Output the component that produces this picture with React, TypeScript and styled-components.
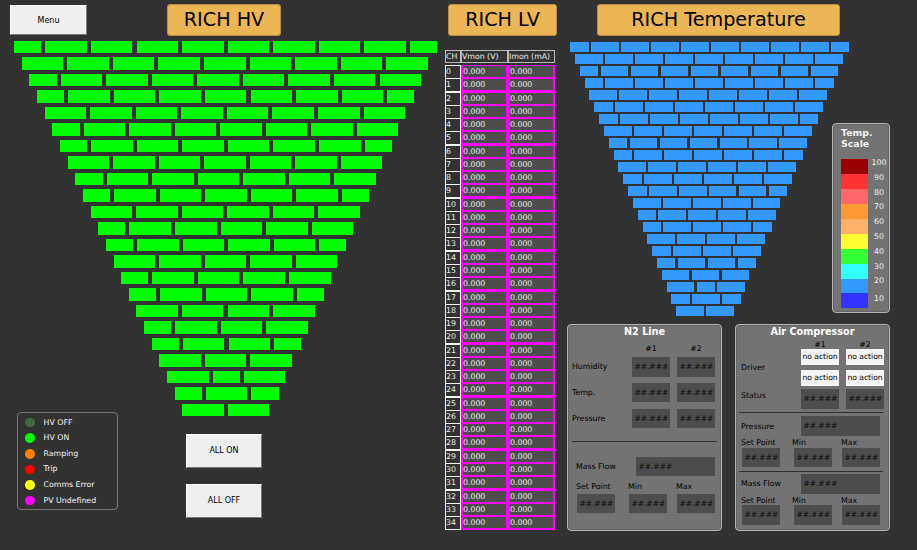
import React from "react";
import styled, { createGlobalStyle } from "styled-components";

const GlobalStyle = createGlobalStyle`
  * { box-sizing: border-box; }
  body {
    margin: 0;
    background: #323232;
    font-family: "DejaVu Sans", sans-serif;
    font-size: 7.8px;
    line-height: 10px;
    color: #000;
  }
`;

const Page = styled.main`
  width: 917px;
  height: 550px;
  overflow: hidden;
  background: #323232;
  display: grid;
  grid-template-columns: 445px 110px 362px;
`;

const Column = styled.section`
  display: flex;
  flex-direction: column;
  min-width: 0;
`;

const TopBar = styled.header<{ $left: number }>`
  display: flex;
  align-items: flex-start;
  flex: none;
  height: 40px;
  padding: 4px 0 0 ${(p) => p.$left}px;
`;

const Title = styled.h1<{ $width: number }>`
  flex: none;
  width: ${(p) => p.$width}px;
  height: 32px;
  margin: 0;
  border: 1px solid #b98f4a;
  border-radius: 3px;
  background: #edb655;
  font-size: 19.2px;
  font-weight: 400;
  line-height: 30px;
  text-align: center;
`;

const Button = styled.button<{ $width: number; $height: number }>`
  flex: none;
  width: ${(p) => p.$width}px;
  height: ${(p) => p.$height}px;
  padding: 1px 0 0;
  border: 1px solid;
  border-color: #fff #777 #777 #fff;
  background: #efefef;
  color: #000;
  font: 8px/10px "DejaVu Sans", sans-serif;
  text-align: center;
`;

const MenuButton = styled(Button)`
  margin: 1px 80px 0 0;
`;

const Wall = styled.div<{ $height: number }>`
  flex: none;
  height: ${(p) => p.$height}px;
`;

const BrickRow = styled.div<{ $left: number; $pitch: number; $gap: number }>`
  display: flex;
  gap: ${(p) => p.$gap}px;
  height: ${(p) => p.$pitch}px;
  padding-left: ${(p) => p.$left}px;
`;

const Brick = styled.div<{ $width: number; $height: number; $fill: string }>`
  flex: none;
  width: ${(p) => p.$width}px;
  height: ${(p) => p.$height}px;
  background: ${(p) => p.$fill};
`;

const HvFooter = styled.div`
  display: flex;
  align-items: flex-start;
`;

const Legend = styled.ul`
  width: 101px;
  height: 98px;
  margin: -9px 68px 0 17px;
  padding: 2.3px 0 0 7px;
  list-style: none;
  border: 1px solid #777;
  border-radius: 4px;
  color: #f2f2f2;
`;

const LegendItem = styled.li`
  display: flex;
  align-items: center;
  height: 15.6px;
`;

const Dot = styled.span<{ $color: string }>`
  width: 9.6px;
  height: 9.6px;
  margin-right: 9px;
  border-radius: 50%;
  background: ${(p) => p.$color};
`;

const Actions = styled.div`
  display: flex;
  flex-direction: column;
  gap: 16px;
  padding-top: 13.4px;
`;

const LvTable = styled.div`
  display: flex;
  flex-direction: column;
  width: 110px;
  margin-top: 10px;
  color: #eee;
`;

const LvHeader = styled.div`
  display: grid;
  grid-template-columns: 16px 47px 47px;
  height: 13px;
  margin-bottom: 2px;
`;

const HeaderCell = styled.div`
  border: 1px solid #bbb;
  line-height: 11px;
  white-space: nowrap;
`;

const LvRow = styled.div`
  display: grid;
  grid-template-columns: 16px 47px 47px;
  height: 13.27px;
`;

const Channel = styled.div`
  border: 1px solid #f4f4f4;
  line-height: 12px;
`;

const Reading = styled.div`
  border: 2px solid #f0f;
  border-top-width: 1px;
  background: #4d4d4d;
  line-height: 11px;
`;

const TempStage = styled.div`
  display: grid;
  grid-template-columns: 335px;
  flex: none;
  height: 284px;
  & > * { grid-area: 1 / 1; }
`;

const panel = `
  border: 1.5px solid #b4b4b4;
  border-radius: 4px;
  background: #737373;
  box-shadow: inset 0 0 0 1px #666;
`;

const ScalePanel = styled.aside`
  ${panel}
  justify-self: end;
  width: 58px;
  height: 190px;
  margin-top: 83px;
  padding: 3px 0 0 8px;
  color: #f2f2f2;
`;

const ScaleTitle = styled.h2`
  margin: 0 0 10px 0;
  font-size: 9.4px;
  line-height: 11px;
  font-weight: 700;
`;

const Scale = styled.div`
  display: grid;
  grid-template-columns: 27px 22px;
`;

const Swatches = styled.div`
  display: flex;
  flex-direction: column;
`;

const Swatch = styled.div<{ $color: string }>`
  height: 14.95px;
  background: ${(p) => p.$color};
`;

const Ticks = styled.div`
  display: flex;
  flex-direction: column;
  text-align: center;
  margin-top: -1px;
  & > span { height: 14.8px; }
  & > span:last-child { margin-top: 3px; }
`;

const Panels = styled.div`
  display: flex;
  gap: 13px;
  margin-left: 12px;
`;

const Panel = styled.section<{ $pad: number }>`
  ${panel}
  width: 155px;
  height: 207px;
  padding-left: ${(p) => p.$pad - 1}px;
`;

const PanelTitle = styled.h2<{ $pad: number }>`
  margin: 0.5px 0 0 -${(p) => p.$pad - 1}px;
  font-size: 9.7px;
  line-height: 12px;
  font-weight: 700;
  text-align: center;
  color: #fff;
`;

const Row = styled.div<{ $cols: string; $height: number; $top?: number; $center?: boolean }>`
  display: grid;
  grid-template-columns: ${(p) => p.$cols};
  align-items: center;
  height: ${(p) => p.$height}px;
  margin-top: ${(p) => p.$top ?? 0}px;
  text-align: ${(p) => (p.$center ? "center" : "left")};
`;

const Label = styled.span`
  padding-top: 1px;
  white-space: nowrap;
`;

const RaisedLabel = styled(Label)`
  padding: 0 0 6px;
`;

const Value = styled.div<{ $width?: number }>`
  width: ${(p) => p.$width ?? 38}px;
  height: 19.4px;
  padding-left: 2.4px;
  background: #4d4d4d;
  line-height: 19px;
  font-size: 7.5px;
  color: #0a0a0a;
`;

const Choice = styled.div`
  width: 38px;
  height: 16px;
  background: #f4f4f4;
  font-size: 7.6px;
  line-height: 16px;
  text-align: center;
  white-space: nowrap;
`;

const Drivers = styled.div`
  display: grid;
  grid-template-columns: 38px 38px;
  gap: 5px 7px;
`;

const Rule = styled.hr<{ $top: number; $width: number; $left?: number }>`
  width: ${(p) => p.$width}px;
  height: 1px;
  margin: ${(p) => p.$top}px 0 0 ${(p) => p.$left ?? 0}px;
  border: 0;
  background: #303030;
`;

/* F = full-width module, S = short module, listed top to bottom. */
const MODULE_ROWS = [
  "SFFFFFFFFS", "FFFFFFFFF", "SFFFFFFFF", "SFFFFFFFS", "FFFFFFFF", "SFFFFFFF",
  "SFFFFFFS", "FFFFFFF", "SFFFFFF", "SFFFFFS", "FFFFFF", "SFFFFF", "SFFFFS",
  "FFFFF", "SFFFF", "SFFFS", "FFFF", "SFFF", "SFFS", "FFF", "FSF", "SFS", "FF",
];

type WallSpec = {
  left: number; step: number; pitch: number; gap: number;
  full: number; short: number; brick: number; height: number; fill: string;
};

const HV_WALL: WallSpec = {
  left: 14.2, step: 7.64, pitch: 16.53, gap: 4.05, full: 41.5, short: 27.2,
  brick: 12.6, height: 380, fill: "#00ff00",
};

const TEMP_WALL: WallSpec = {
  left: 15.2, step: 4.82, pitch: 12.01, gap: 2.3, full: 27.7, short: 18.5,
  brick: 9.7, height: 284, fill: "#3399ff",
};

const LEGEND = [
  ["HV OFF", "#3f6b3f"], ["HV ON", "#00ff00"], ["Ramping", "#ff8000"],
  ["Trip", "#ff0000"], ["Comms Error", "#ffff00"], ["PV Undefined", "#ff00ff"],
];

const SCALE = [
  "#990000", "#ff3333", "#ff6666", "#ff9933", "#ffb066",
  "#ffff33", "#33ff33", "#33ffff", "#3399ff", "#3333ff",
];

function ModuleWall({ spec }: { spec: WallSpec }) {
  return (
    <Wall $height={spec.height}>
      {MODULE_ROWS.map((row, i) => (
        <BrickRow key={i} $left={spec.left + i * spec.step} $pitch={spec.pitch} $gap={spec.gap}>
          {row.split("").map((kind, j) => (
            <Brick
              key={j}
              $width={kind === "F" ? spec.full : spec.short}
              $height={spec.brick}
              $fill={spec.fill}
            />
          ))}
        </BrickRow>
      ))}
    </Wall>
  );
}

const TempWallOffset = styled.div`
  padding-top: 2.1px;
  width: 362px;
`;

const HvWallOffset = styled.div`
  padding-top: 0.5px;
`;

const EMPTY = "##.###";

function Limits({ labelTop, valueTop }: { labelTop: number; valueTop: number }) {
  return (
    <>
      <Row $cols="51px 49px 38px" $height={10} $top={labelTop}>
        <Label>Set Point</Label><Label>Min</Label><Label>Max</Label>
      </Row>
      <Row $cols="1px 52px 48px 38px" $height={19} $top={valueTop}>
        <span />
        <Value>{EMPTY}</Value><Value>{EMPTY}</Value><Value>{EMPTY}</Value>
      </Row>
    </>
  );
}

export default function App() {
  return (
    <>
      <GlobalStyle />
      <Page>
        <Column>
          <TopBar $left={10}>
            <MenuButton $width={77} $height={30}>Menu</MenuButton>
            <Title $width={114}>RICH HV</Title>
          </TopBar>
          <HvWallOffset><ModuleWall spec={HV_WALL} /></HvWallOffset>
          <HvFooter>
            <Legend>
              {LEGEND.map(([name, color]) => (
                <LegendItem key={name}><Dot $color={color} />{name}</LegendItem>
              ))}
            </Legend>
            <Actions>
              <Button $width={76} $height={34}>ALL ON</Button>
              <Button $width={76} $height={34}>ALL OFF</Button>
            </Actions>
          </HvFooter>
        </Column>

        <Column>
          <TopBar $left={3}><Title $width={109}>RICH LV</Title></TopBar>
          <LvTable>
            <LvHeader>
              <HeaderCell>CH</HeaderCell>
              <HeaderCell>Vmon (V)</HeaderCell>
              <HeaderCell>Imon (mA)</HeaderCell>
            </LvHeader>
            {Array.from({ length: 35 }, (_, ch) => (
              <LvRow key={ch}>
                <Channel>{ch}</Channel>
                <Reading>0.000</Reading>
                <Reading>0.000</Reading>
              </LvRow>
            ))}
          </LvTable>
        </Column>

        <Column>
          <TopBar $left={42}><Title $width={243}>RICH Temperature</Title></TopBar>
          <TempStage>
            <TempWallOffset><ModuleWall spec={TEMP_WALL} /></TempWallOffset>
            <ScalePanel>
              <ScaleTitle>Temp.<br />Scale</ScaleTitle>
              <Scale>
                <Swatches>{SCALE.map((c) => <Swatch key={c} $color={c} />)}</Swatches>
                <Ticks>{SCALE.map((c, i) => <span key={c}>{100 - i * 10}</span>)}</Ticks>
              </Scale>
            </ScalePanel>
          </TempStage>
          <Panels>
            <Panel $pad={5}>
              <PanelTitle $pad={5}>N2 Line</PanelTitle>
              <Row $cols="60px 38px 7px 38px" $height={10} $top={5} $center>
                <span /><Label>#1</Label><span /><Label>#2</Label>
              </Row>
              {["Humidity", "Temp.", "Pressure"].map((name, i) => (
                <Row key={name} $cols="60px 45px 38px" $height={19.4} $top={i === 0 ? 4.8 : 6.4}>
                  <Label>{name}</Label><Value>{EMPTY}</Value><Value>{EMPTY}</Value>
                </Row>
              ))}
              <Rule $top={13} $width={145} />
              <Row $cols="4px 60px 79px" $height={19.4} $top={14.4}>
                <span /><Label>Mass Flow</Label><Value $width={79}>{EMPTY}</Value>
              </Row>
              <Row $cols="4px 52px 48px 38px" $height={10} $top={5}>
                <span /><Label>Set Point</Label><Label>Min</Label><Label>Max</Label>
              </Row>
              <Row $cols="5px 52px 48px 38px" $height={19.4} $top={3}>
                <span /><Value>{EMPTY}</Value><Value>{EMPTY}</Value><Value>{EMPTY}</Value>
              </Row>
            </Panel>
            <Panel $pad={6}>
              <PanelTitle $pad={6}>Air Compressor</PanelTitle>
              <Row $cols="60px 38px 7px 38px" $height={10} $top={1.5} $center>
                <span /><Label>#1</Label><span /><Label>#2</Label>
              </Row>
              <Row $cols="60px 83px" $height={37} $top={0}>
                <Label>Driver</Label>
                <Drivers>
                  {[0, 1, 2, 3].map((n) => <Choice key={n}>no action</Choice>)}
                </Drivers>
              </Row>
              <Row $cols="60px 45px 38px" $height={19} $top={3.4}>
                <RaisedLabel>Status</RaisedLabel><Value>{EMPTY}</Value><Value>{EMPTY}</Value>
              </Row>
              <Rule $top={4} $width={144} $left={-2} />
              <Row $cols="60px 79px" $height={19} $top={3}>
                <Label>Pressure</Label><Value $width={79}>{EMPTY}</Value>
              </Row>
              <Limits labelTop={1.7} valueTop={0.8} />
              <Rule $top={3.7} $width={144} $left={-2} />
              <Row $cols="60px 79px" $height={19} $top={2.6}>
                <Label>Mass Flow</Label><Value $width={79}>{EMPTY}</Value>
              </Row>
              <Limits labelTop={1.4} valueTop={0.8} />
            </Panel>
          </Panels>
        </Column>
      </Page>
    </>
  );
}
